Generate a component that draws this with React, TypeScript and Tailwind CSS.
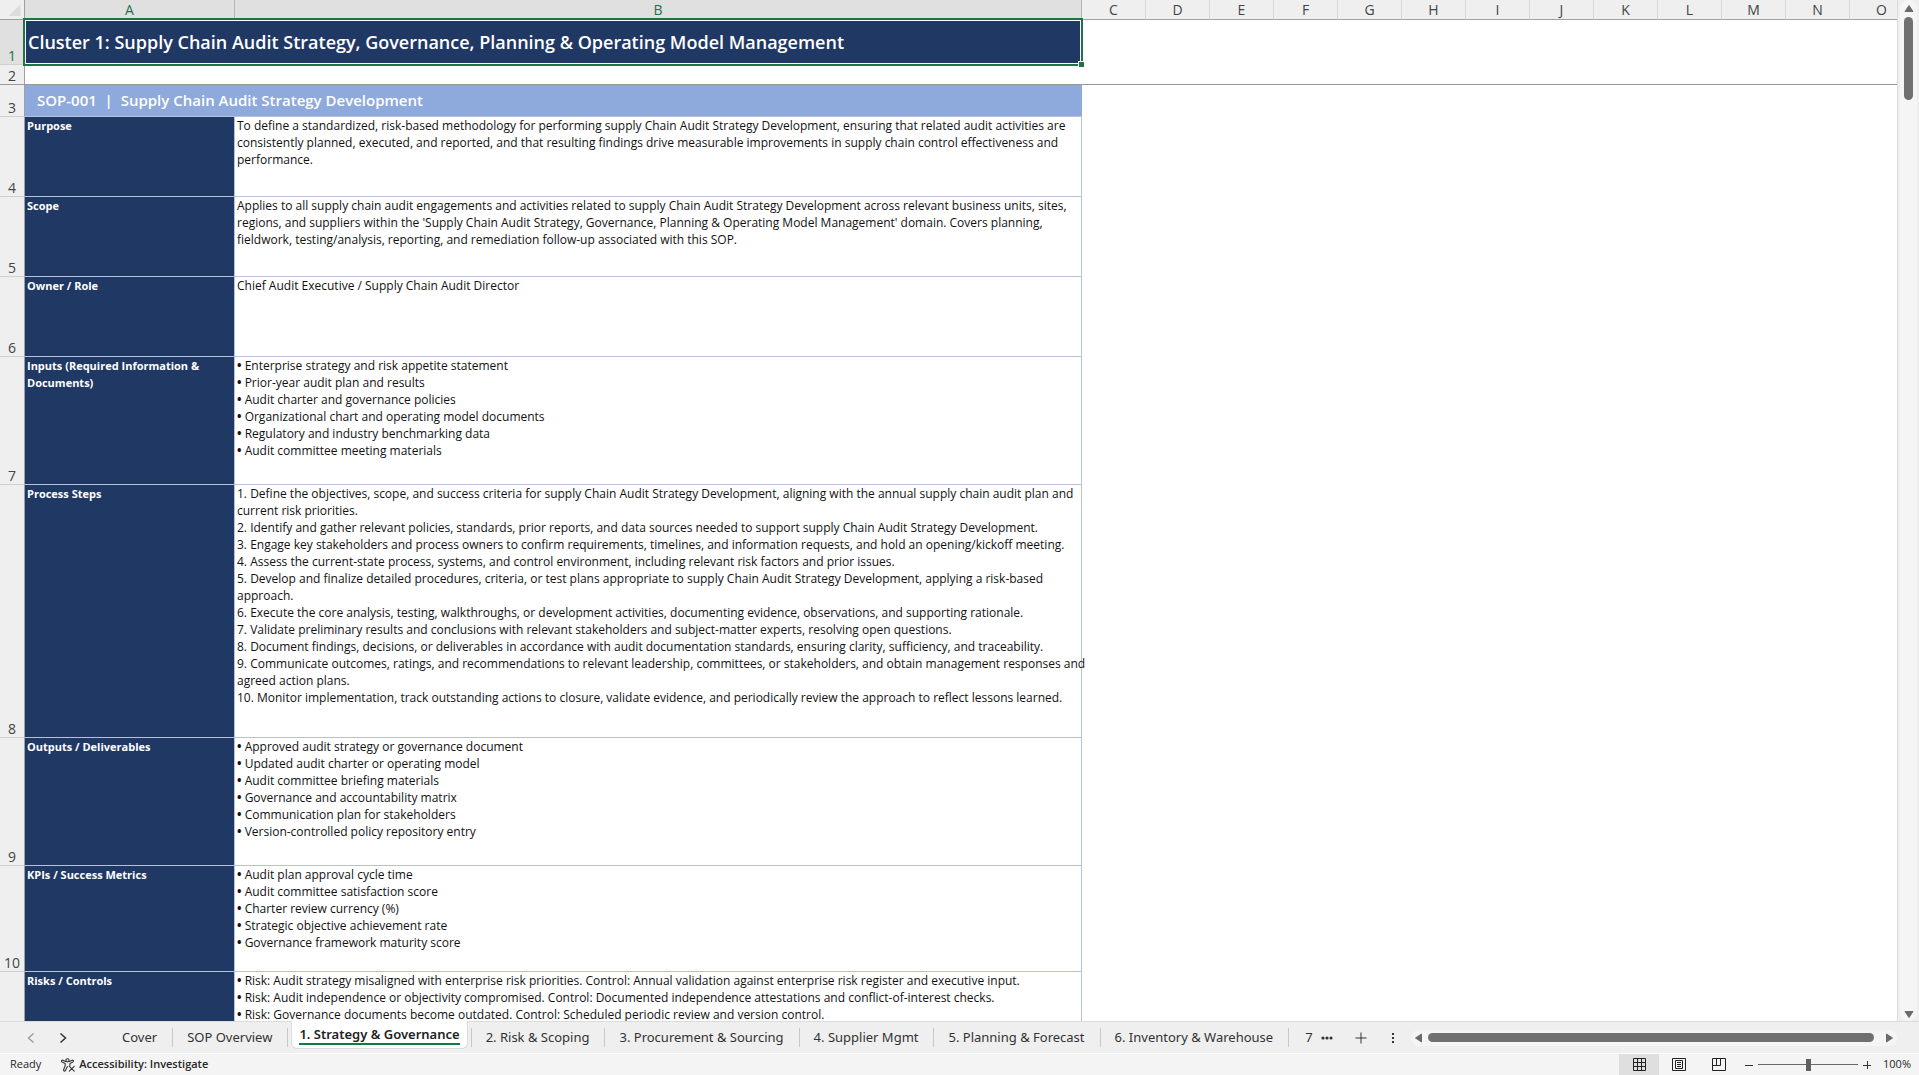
import { useState } from 'react'
import clsx from 'clsx'

const extraColumns = ['C', 'D', 'E', 'F', 'G', 'H', 'I', 'J', 'K', 'L', 'M', 'N', 'O']

const rows = [
  {
    num: 4,
    height: 'h-20',
    label: ['Purpose'],
    lines: [
      'To define a standardized, risk-based methodology for performing supply Chain Audit Strategy Development, ensuring that related audit activities are',
      'consistently planned, executed, and reported, and that resulting findings drive measurable improvements in supply chain control effectiveness and',
      'performance.',
    ],
  },
  {
    num: 5,
    height: 'h-20',
    label: ['Scope'],
    lines: [
      'Applies to all supply chain audit engagements and activities related to supply Chain Audit Strategy Development across relevant business units, sites,',
      "regions, and suppliers within the 'Supply Chain Audit Strategy, Governance, Planning & Operating Model Management' domain. Covers planning,",
      'fieldwork, testing/analysis, reporting, and remediation follow-up associated with this SOP.',
    ],
  },
  {
    num: 6,
    height: 'h-20',
    label: ['Owner / Role'],
    lines: ['Chief Audit Executive / Supply Chain Audit Director'],
  },
  {
    num: 7,
    height: 'h-32',
    label: ['Inputs (Required Information &', 'Documents)'],
    lines: [
      '• Enterprise strategy and risk appetite statement',
      '• Prior-year audit plan and results',
      '• Audit charter and governance policies',
      '• Organizational chart and operating model documents',
      '• Regulatory and industry benchmarking data',
      '• Audit committee meeting materials',
    ],
  },
  {
    num: 8,
    height: 'h-[253px]',
    label: ['Process Steps'],
    lines: [
      '1. Define the objectives, scope, and success criteria for supply Chain Audit Strategy Development, aligning with the annual supply chain audit plan and',
      'current risk priorities.',
      '2. Identify and gather relevant policies, standards, prior reports, and data sources needed to support supply Chain Audit Strategy Development.',
      '3. Engage key stakeholders and process owners to confirm requirements, timelines, and information requests, and hold an opening/kickoff meeting.',
      '4. Assess the current-state process, systems, and control environment, including relevant risk factors and prior issues.',
      '5. Develop and finalize detailed procedures, criteria, or test plans appropriate to supply Chain Audit Strategy Development, applying a risk-based',
      'approach.',
      '6. Execute the core analysis, testing, walkthroughs, or development activities, documenting evidence, observations, and supporting rationale.',
      '7. Validate preliminary results and conclusions with relevant stakeholders and subject-matter experts, resolving open questions.',
      '8. Document findings, decisions, or deliverables in accordance with audit documentation standards, ensuring clarity, sufficiency, and traceability.',
      '9. Communicate outcomes, ratings, and recommendations to relevant leadership, committees, or stakeholders, and obtain management responses and',
      'agreed action plans.',
      '10. Monitor implementation, track outstanding actions to closure, validate evidence, and periodically review the approach to reflect lessons learned.',
    ],
  },
  {
    num: 9,
    height: 'h-32',
    label: ['Outputs / Deliverables'],
    lines: [
      '• Approved audit strategy or governance document',
      '• Updated audit charter or operating model',
      '• Audit committee briefing materials',
      '• Governance and accountability matrix',
      '• Communication plan for stakeholders',
      '• Version-controlled policy repository entry',
    ],
  },
  {
    num: 10,
    height: 'h-[106px]',
    label: ['KPIs / Success Metrics'],
    lines: [
      '• Audit plan approval cycle time',
      '• Audit committee satisfaction score',
      '• Charter review currency (%)',
      '• Strategic objective achievement rate',
      '• Governance framework maturity score',
    ],
  },
  {
    num: 11,
    height: 'h-32',
    label: ['Risks / Controls'],
    lines: [
      '• Risk: Audit strategy misaligned with enterprise risk priorities. Control: Annual validation against enterprise risk register and executive input.',
      '• Risk: Audit independence or objectivity compromised. Control: Documented independence attestations and conflict-of-interest checks.',
      '• Risk: Governance documents become outdated. Control: Scheduled periodic review and version control.',
    ],
  },
]

const tabs = [
  'Cover',
  'SOP Overview',
  '1. Strategy & Governance',
  '2. Risk & Scoping',
  '3. Procurement & Sourcing',
  '4. Supplier Mgmt',
  '5. Planning & Forecast',
  '6. Inventory & Warehouse',
]

function ColumnHeader({ name, selected }: { name: string; selected?: boolean }) {
  return (
    <th
      scope="col"
      className={clsx(
        'h-5 border-r border-b border-b-[#a0a0a0] p-0 text-center text-sm leading-[18px] font-normal',
        selected ? 'border-r-[#b5b5b5] bg-[#e0e0e0] text-[#217346]' : 'border-r-[#d6d6d6] bg-[#efefef] text-[#444]'
      )}
    >
      {name}
    </th>
  )
}

function RowHeader({ num, selected, frozen }: { num: number; selected?: boolean; frozen?: boolean }) {
  return (
    <th
      scope="row"
      className={clsx(
        'border-r border-b border-r-[#a0a0a0] p-0 text-center align-bottom text-sm leading-4 font-normal',
        frozen ? 'border-b-[#999]' : 'border-b-[#d0d0d0]',
        selected ? 'bg-[#e0e0e0] text-[#217346]' : 'bg-[#efefef] text-[#444]'
      )}
    >
      {num}
    </th>
  )
}

function Line({ text }: { text: string }) {
  if (!text.startsWith('•')) return <div>{text}</div>
  return (
    <div>
      <b>•</b>
      {text.slice(1)}
    </div>
  )
}

function Sheet() {
  return (
    <table className="w-[1914px] table-fixed border-separate border-spacing-0 bg-white">
      <colgroup>
        <col className="w-[25px]" />
        <col className="w-[210px]" />
        <col className="w-[847px]" />
        {extraColumns.map((name) => (
          <col key={name} className="w-16" />
        ))}
      </colgroup>
      <thead>
        <tr>
          <td className="h-5 border-r border-b border-[#a0a0a0] bg-[#efefef] p-0">
            <svg viewBox="0 0 24 19" className="block h-[19px] w-6" fill="#dcdcdc">
              <path d="M20.5 4v12H8.500z" />
            </svg>
          </td>
          <ColumnHeader name="A" selected />
          <ColumnHeader name="B" selected />
          {extraColumns.map((name) => (
            <ColumnHeader key={name} name={name} />
          ))}
        </tr>
      </thead>
      <tbody>
        <tr className="h-[45px]">
          <RowHeader num={1} selected />
          <td colSpan={2} className="relative bg-[#203864] p-0 pb-0.5 pl-[3px] align-middle">
            <span className="block text-lg leading-6 font-semibold whitespace-nowrap text-white">
              Cluster 1: Supply Chain Audit Strategy, Governance, Planning &amp; Operating Model Management
            </span>
            {/* Selection outline with its fill handle */}
            <div className="pointer-events-none absolute -top-0.5 -right-px -bottom-px -left-0.5 border-2 border-[#217346]">
              <div className="h-full border border-white" />
              <div className="absolute -right-[3px] -bottom-[3px] size-1.5 border-t border-l border-white bg-[#217346]" />
            </div>
          </td>
          <td colSpan={extraColumns.length} className="p-0" />
        </tr>
        <tr className="h-5">
          <RowHeader num={2} frozen />
          <td colSpan={2 + extraColumns.length} className="border-b border-[#999] p-0" />
        </tr>
        <tr className="h-8">
          <RowHeader num={3} />
          <td
            colSpan={2}
            className="border-b border-[#b4c0dc] bg-[#8ea9db] p-0 pb-0.5 pl-3 align-middle text-[15px] leading-5 font-semibold whitespace-pre text-white"
          >
            {'SOP-001  |  Supply Chain Audit Strategy Development'}
          </td>
          <td colSpan={extraColumns.length} className="p-0" />
        </tr>
        {rows.map((row) => (
          <tr key={row.num} className={row.height}>
            <RowHeader num={row.num} />
            <td className="border-r border-b border-[#b4c0dc] bg-[#203864] p-0 pl-0.5 align-top text-[11px] leading-[17px] font-bold whitespace-nowrap text-white">
              {row.label.map((line) => (
                <div key={line}>{line}</div>
              ))}
            </td>
            <td className="border-r border-b border-[#b4c0dc] p-0 pl-0.5 align-top text-xs leading-[17px] whitespace-nowrap text-[#111]">
              {row.lines.map((line) => (
                <Line key={line} text={line} />
              ))}
            </td>
            <td colSpan={extraColumns.length} className="p-0" />
          </tr>
        ))}
      </tbody>
    </table>
  )
}

function Arrow({ d, label }: { d: string; label: string }) {
  return (
    <button aria-label={label} className="shrink-0">
      <svg viewBox="0 0 10 10" className="block size-2.5" fill="#6b6b6b" stroke="#6b6b6b" strokeLinejoin="round">
        <path d={d} />
      </svg>
    </button>
  )
}

function VerticalScrollbar() {
  return (
    <div className="w-[22px] shrink-0 border-l border-[#dcdcdc] bg-[#efefef] pr-0.5 pl-0.5">
      <div className="flex h-full flex-col items-center rounded-full bg-[#f5f5f5] pt-1 pb-px">
        <Arrow label="Scroll up" d="M5 1.500 9 7.500H1z" />
        <div className="mt-[3px] h-[83px] w-[9px] rounded-full bg-[#707070]" />
        <div className="flex-1" />
        <Arrow label="Scroll down" d="M5 7.500 9 1.500H1z" />
      </div>
    </div>
  )
}

function SheetTabs() {
  const [active, setActive] = useState('1. Strategy & Governance')

  return (
    <nav className="flex h-8 shrink-0 border-t border-[#dcdcdc] bg-[#efefef] font-['Noto_Sans',sans-serif] text-[13px] text-[#333]">
      <div className="flex w-[108px] shrink-0 items-center pl-[26px]">
        <button aria-label="Previous sheet">
          <svg viewBox="0 0 10 12" className="block h-3 w-2.5" fill="none" stroke="#999" strokeWidth="1.300">
            <path d="M7.500 1.500 2.500 6l5 4.500" />
          </svg>
        </button>
        <button aria-label="Next sheet" className="ml-[22px]">
          <svg viewBox="0 0 10 12" className="block h-3 w-2.5" fill="none" stroke="#333" strokeWidth="1.500">
            <path d="M2.500 1.500l5 4.500-5 4.500" />
          </svg>
        </button>
      </div>
      {tabs.map((tab) =>
        tab === active ? (
          <div key={tab} className="flex shrink-0">
            <button className="mx-[3px] -mt-px h-7 rounded-b-md border border-t-0 border-[#dcdcdc] bg-white px-[7px] font-semibold whitespace-nowrap">
              <span className="block border-b-2 border-[#107c41] pt-px leading-[18px] text-[#222]">{tab}</span>
            </button>
            <div className="my-1.5 w-px bg-[#c8c8c8]" />
          </div>
        ) : (
          <button
            key={tab}
            onClick={() => setActive(tab)}
            className="my-1.5 shrink-0 border-r border-[#c8c8c8] pr-[15px] pl-3.5 leading-[19px] whitespace-nowrap"
          >
            {tab}
          </button>
        )
      )}
      <div className="flex flex-1 items-center pl-4">
        <button className="w-2 shrink-0 overflow-hidden text-left" aria-label="7">
          7
        </button>
        <button aria-label="More sheets" className="ml-2">
          <svg viewBox="0 0 12 4" className="block h-1 w-3" fill="#333">
            <circle cx="2" cy="2" r="1.600" />
            <circle cx="6" cy="2" r="1.600" />
            <circle cx="10" cy="2" r="1.600" />
          </svg>
        </button>
        <button aria-label="New sheet" className="ml-[22px]">
          <svg viewBox="0 0 12 12" className="block size-3" stroke="#333" strokeWidth="1">
            <path d="M6 .5v11M.5 6h11" />
          </svg>
        </button>
        <button aria-label="Resize scroll bar" className="ml-6">
          <svg viewBox="0 0 4 12" className="block h-3 w-1" fill="#333">
            <path d="M1 1h2v2H1zM1 5h2v2H1zM1 9h2v2H1z" />
          </svg>
        </button>
        <div className="mr-[22px] ml-4 flex h-4 flex-1 items-center rounded-full bg-[#f5f5f5] px-[3px]">
          <Arrow label="Scroll left" d="M1.500 5 7.500 1v8z" />
          <div className="mr-2.5 ml-1 h-[9px] flex-1 rounded-full bg-[#707070]" />
          <Arrow label="Scroll right" d="M8.500 5 2.500 1v8z" />
        </div>
      </div>
    </nav>
  )
}

function StatusBar() {
  const [zoom, setZoom] = useState(100)

  return (
    <footer className="flex h-[22px] shrink-0 items-center border-t border-white bg-[#f4f4f4] text-[11px] text-[#262626]">
      <span className="pl-2.5">Ready</span>
      <button className="ml-5 flex items-center gap-[3px] font-semibold">
        <svg viewBox="0 0 15 14" className="block h-3.5 w-[15px]" fill="none" stroke="#333" strokeWidth="1.100" strokeLinejoin="round" strokeLinecap="round">
          <circle cx="6.500" cy="2.300" r="1.600" />
          <path d="M4.700 3.400 1.800 2.200C.6 2-.1 3.500 1.200 4.100l3 1.300v2.300l-1.600 4.100c-.3 1.300 1.300 1.800 1.800.7L6.500 8.600" />
          <path d="M8.300 3.400l2.900-1.200c1.300-.2 1.800 1.300.6 1.900L8.900 5.400v2" />
          <path d="M8.300 8.300l4.900 4.900M13.200 8.300l-4.900 4.900" />
        </svg>
        Accessibility: Investigate
      </button>
      <div className="ml-auto flex h-full items-center">
        <button aria-label="Normal" className="flex h-full w-10 items-center justify-center bg-[#dfdfdf]">
          <svg viewBox="0 0 13 13" className="block size-[13px]" fill="none" stroke="#222">
            <path d="M.5.5h12v12H.5zM4.500.5v12M8.500.5v12M.5 4.500h12M.5 8.500h12" />
          </svg>
        </button>
        <button aria-label="Page Layout" className="flex h-full w-10 items-center justify-center">
          <svg viewBox="0 0 14 13" className="block h-[13px] w-3.5" fill="none" stroke="#222">
            <path d="M.5.5h13v12H.5zM3.500 2.500h7v8h-7zM5 4.500h4M5 6.500h4M5 8.500h4" />
          </svg>
        </button>
        <button aria-label="Page Break Preview" className="flex h-full w-10 items-center justify-center">
          <svg viewBox="0 0 14 13" className="block h-[13px] w-3.5" fill="none" stroke="#222">
            <path d="M.5.5h13v12H.5zM4.500.5v7M8.500.5v7M.5 7.500h8" />
          </svg>
        </button>
        <button aria-label="Zoom out" className="ml-1.5" onClick={() => setZoom(zoom - 10)}>
          <svg viewBox="0 0 8 8" className="block size-2" stroke="#333">
            <path d="M0 4.500h8" />
          </svg>
        </button>
        <input
          type="range"
          aria-label="Zoom"
          min={0}
          max={200}
          value={zoom}
          onChange={(e) => setZoom(Number(e.target.value))}
          className="mx-[5px] h-3 w-[100px] appearance-none bg-[linear-gradient(#6b6b6b,#6b6b6b)] bg-[length:100%_1px] bg-center bg-no-repeat [&::-webkit-slider-thumb]:h-3 [&::-webkit-slider-thumb]:w-[5px] [&::-webkit-slider-thumb]:appearance-none [&::-webkit-slider-thumb]:bg-[#606060]"
        />
        <button aria-label="Zoom in" onClick={() => setZoom(zoom + 10)}>
          <svg viewBox="0 0 8 8" className="block size-2" stroke="#333">
            <path d="M0 4.500h8M4.500 0v8" />
          </svg>
        </button>
        <span className="w-12 pr-2 text-right">{zoom}%</span>
      </div>
    </footer>
  )
}

export default function App() {
  return (
    <main className="flex h-screen flex-col overflow-hidden bg-[#efefef] font-['Open_Sans',sans-serif]">
      <div className="flex min-h-0 flex-1">
        <div className="min-w-0 flex-1 overflow-hidden bg-white">
          <Sheet />
        </div>
        <VerticalScrollbar />
      </div>
      <SheetTabs />
      <StatusBar />
    </main>
  )
}
